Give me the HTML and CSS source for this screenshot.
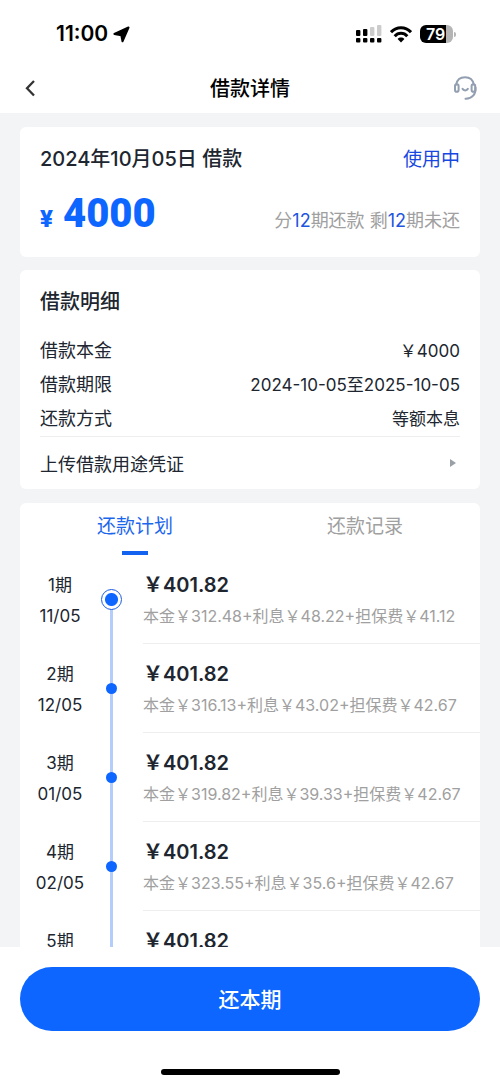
FILE: index.html
```html
<!DOCTYPE html>
<html lang="zh-CN">
<head>
<meta charset="utf-8">
<meta name="viewport" content="width=device-width, initial-scale=1">
<title>借款详情</title>
<link rel="stylesheet" href="styles.css">
</head>
<body>
<div class="status">
  <div class="status-left">
    <span class="time">11:00</span>
    <svg width="17" height="17" viewBox="0 0 17 17"><path d="M15.500 1.500 9.500 15.300 8.300 9.200 1.400 8z" fill="#000" stroke="#000" stroke-width="2" stroke-linejoin="round"/></svg>
  </div>
  <div class="status-right">
    <svg width="26" height="18" viewBox="0 0 26 18">
      <g fill="#000"><rect x="0" y="5" width="4.400" height="6" rx="1"/><rect x="7" y="4" width="4.400" height="7" rx="1"/><rect x="0" y="13" width="4.400" height="4.400" rx="1"/><rect x="7" y="13" width="4.400" height="4.400" rx="1"/><rect x="14" y="13" width="4.400" height="4.400" rx="1"/><rect x="21" y="13" width="4.400" height="4.400" rx="1"/></g>
      <g fill="#ccc"><rect x="14" y="2" width="4.400" height="9" rx="1"/><rect x="21" y="0" width="4.400" height="11" rx="1"/></g>
    </svg>
    <svg width="22" height="17" viewBox="0 0 22 17"><g fill="none" stroke="#000" stroke-width="3"><path d="M1 6.200C6.600.2 15.400.2 21 6.200"/><path d="M4.700 10.200c3.500-3.900 9.100-3.900 12.600 0"/></g><path d="M7.600 13c1.900-1.900 4.900-1.900 6.800 0L11 16.500z" fill="#000"/></svg>
    <div class="battery"><span class="battery-level">79</span></div>
  </div>
</div>
<header class="nav">
  <button class="icon-button" type="button" aria-label="返回"><svg width="20" height="20" viewBox="0 0 20 20"><path d="M14 2 7 9.200l7 7.300" fill="none" stroke="#333" stroke-width="2.300"/></svg></button>
  <h1 class="nav-title">借款详情</h1>
  <button class="icon-button" type="button" aria-label="客服"><svg width="26" height="26" viewBox="0 0 26 26"><g fill="none" stroke="#929fb0" stroke-width="2" stroke-linecap="round"><path d="M2.200 8.500C3 4 6.500 1.200 11 1.200S19 4 19.800 8.500"/><rect x="1" y="8.300" width="3.600" height="7.400" rx="1.800"/><rect x="17.600" y="8.300" width="3.600" height="7.400" rx="1.800"/><path d="M21.600 11.500c.6 6.500-3.800 11.500-10.100 11.300"/><path d="M8.500 12.800c1 2.100 4.400 2.100 5.400 0"/></g></svg></button>
</header>
<main class="content">
  <section class="card summary">
    <div class="line">
      <h2 class="card-title">2024年10月05日 借款</h2>
      <span class="state">使用中</span>
    </div>
    <div class="line amount-line">
      <div class="total"><span class="currency">¥</span><span>4000</span></div>
      <p class="terms">分<b>12</b>期还款 剩<b>12</b>期未还</p>
    </div>
  </section>
  <section class="card detail">
    <h2 class="card-title">借款明细</h2>
    <dl class="facts">
      <div class="fact"><dt>借款本金</dt><dd>￥4000</dd></div>
      <div class="fact"><dt>借款期限</dt><dd>2024-10-05至2025-10-05</dd></div>
      <div class="fact"><dt>还款方式</dt><dd>等额本息</dd></div>
    </dl>
    <a class="upload" href="#">上传借款用途凭证<svg width="14" height="10" viewBox="0 0 14 10"><path d="M4 1v8l6-4z" fill="#9aa0a8"/></svg></a>
  </section>
  <section class="card plan">
    <div class="tabs" role="tablist">
      <button class="tab active" type="button" role="tab" aria-selected="true">还款计划</button>
      <button class="tab" type="button" role="tab" aria-selected="false">还款记录</button>
    </div>
    <ol class="periods">
      <li class="period current"><div class="when"><span>1期</span><span>11/05</span></div><div class="marker"><i class="track"></i><i class="dot"></i></div><div class="due"><strong>￥401.82</strong><span>本金￥312.48+利息￥48.22+担保费￥41.12</span></div></li>
      <li class="period"><div class="when"><span>2期</span><span>12/05</span></div><div class="marker"><i class="track"></i><i class="dot"></i></div><div class="due"><strong>￥401.82</strong><span>本金￥316.13+利息￥43.02+担保费￥42.67</span></div></li>
      <li class="period"><div class="when"><span>3期</span><span>01/05</span></div><div class="marker"><i class="track"></i><i class="dot"></i></div><div class="due"><strong>￥401.82</strong><span>本金￥319.82+利息￥39.33+担保费￥42.67</span></div></li>
      <li class="period"><div class="when"><span>4期</span><span>02/05</span></div><div class="marker"><i class="track"></i><i class="dot"></i></div><div class="due"><strong>￥401.82</strong><span>本金￥323.55+利息￥35.6+担保费￥42.67</span></div></li>
      <li class="period"><div class="when"><span>5期</span></div><div class="marker"><i class="track"></i><i class="dot"></i></div><div class="due"><strong>￥401.82</strong></div></li>
    </ol>
  </section>
</main>
<footer class="footer">
  <button class="pay" type="button">还本期</button>
  <div class="home"></div>
</footer>
</body>
</html>
```
FILE: styles.css
```css
* { box-sizing: border-box; margin: 0; padding: 0; }
body {
  display: flex;
  flex-direction: column;
  height: 100vh;
  background: #fff;
  color: #20262f;
  font-family: Inter, "Noto Sans CJK SC", sans-serif;
  font-size: 17px;
}
button { border: 0; background: none; font: inherit; color: inherit; cursor: pointer; }
svg { display: block; }
.status { display: flex; flex: none; justify-content: space-between; align-items: center; height: 64px; padding: 4px 44px 0 56px; color: #000; }
.status-left { display: flex; align-items: center; gap: 5px; }
.time { font-size: 21px; font-weight: 600; line-height: 24px; }
.status-right { display: flex; align-items: center; gap: 8px; }
.battery { display: flex; align-items: center; gap: 1px; }
.battery::after { content: ""; width: 2px; height: 5px; border-radius: 0 2px 2px 0; background: #b5b5b5; }
.battery-level { width: 33px; height: 18px; padding-left: 6px; border-radius: 6px; background: linear-gradient(90deg, #000 79%, #b5b5b5 79%); color: #fff; font-size: 16px; font-weight: 600; line-height: 18px; }
.nav { display: flex; flex: none; justify-content: space-between; align-items: center; height: 49px; padding: 0 20px; }
.icon-button { display: flex; align-items: center; width: 30px; height: 30px; }
.icon-button:last-child { justify-content: flex-end; }
.nav-title { color: #000; font-size: 20px; font-weight: 500; line-height: 28px; }
.content { display: flex; flex: 1; flex-direction: column; gap: 13px; min-height: 0; overflow: hidden; padding: 14px 20px 0; background: #f3f4f6; }
.card { flex: none; border-radius: 6px; background: #fff; }
.card-title { font-size: 20px; font-weight: 500; line-height: 28px; }
.line { display: flex; justify-content: space-between; align-items: baseline; }
.summary { padding: 18px 20px 14px; }
.state { color: #1747e0; font-size: 19px; line-height: 28px; }
.amount-line { margin-top: 16px; }
.total { display: flex; align-items: baseline; gap: 10px; color: #0d66ff; font-family: Roboto, sans-serif; font-size: 40px; font-weight: 900; line-height: 48px; }
.currency { font-size: 24px; }
.terms { color: #a0a0a0; font-size: 18px; }
.terms b { color: #1f55e0; font-weight: 400; }
.detail { padding: 18px 20px 0; }
.facts { margin-top: 18px; border-bottom: 1px solid #eee; }
.fact { display: flex; justify-content: space-between; line-height: 34px; }
.fact dt { font-size: 18px; }
.upload { display: flex; justify-content: space-between; align-items: center; height: 52px; color: inherit; font-size: 18px; text-decoration: none; }
.plan { margin-top: 1px; }
.tabs { display: grid; grid-template-columns: 1fr 1fr; }
.tab { display: flex; flex-direction: column; align-items: center; padding-top: 10px; color: #a0a0a0; font-size: 19px; line-height: 28px; }
.tab::after { content: ""; width: 26px; height: 4px; margin-top: 10px; }
.tab.active { color: #1c66ee; }
.tab.active::after { background: #1463f0; }
.periods { list-style: none; }
.period { display: grid; grid-template-columns: 80px 22px 1fr; height: 89px; line-height: 24px; }
.when { display: flex; flex-direction: column; align-items: center; gap: 7px; padding-top: 18px; }
.marker { display: grid; place-items: center; }
.track, .dot { grid-area: 1 / 1; }
.track { align-self: stretch; width: 3px; background: #b4cdfa; }
.dot { width: 11px; height: 11px; border-radius: 50%; background: #0d66ff; }
.current .track { margin-top: 44px; }
.current .dot { width: 21px; height: 21px; border: 1px solid #1c5ce0; padding: 3px; background: radial-gradient(circle, #0d66ff 6px, #fff 7px); }
.due { display: flex; flex-direction: column; gap: 7px; margin-left: 21px; padding-top: 18px; border-bottom: 1px solid #eee; white-space: nowrap; }
.due strong { font-size: 20px; font-weight: 600; }
.due span { color: #a0a0a0; font-size: 16px; }
.footer { flex: none; padding: 20px 20px 9px; background: #fff; }
.pay { display: block; width: 100%; height: 64px; padding-bottom: 3px; border-radius: 32px; background: #0d66ff; color: #fff; font-size: 21px; font-weight: 500; }
.home { width: 179px; height: 6px; margin: 38px auto 0; border-radius: 3px; background: #000; }
```
